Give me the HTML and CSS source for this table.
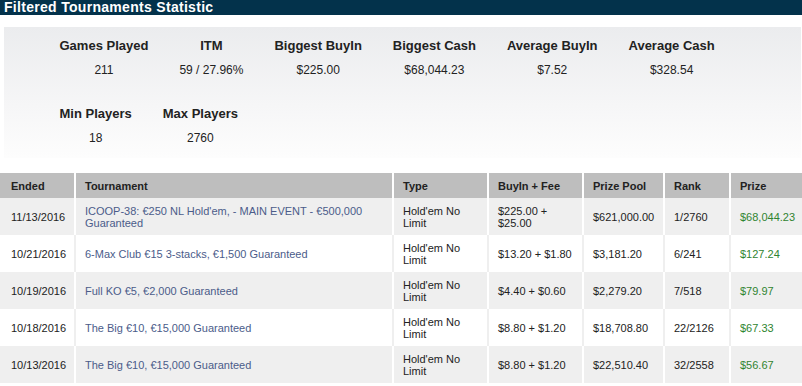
FILE: index.html
```html
<!DOCTYPE html>
<html>
<head>
<meta charset="utf-8">
<link rel="stylesheet" href="styles.css">
</head>
<body>
<div class="titlebar">Filtered Tournaments Statistic</div>
<div class="stats">
  <div class="stats-row">
    <div class="stat"><div class="label">Games Played</div><div class="value">211</div></div>
    <div class="stat"><div class="label">ITM</div><div class="value">59 / 27.96%</div></div>
    <div class="stat"><div class="label">Biggest BuyIn</div><div class="value">$225.00</div></div>
    <div class="stat"><div class="label">Biggest Cash</div><div class="value">$68,044.23</div></div>
    <div class="stat"><div class="label">Average BuyIn</div><div class="value">$7.52</div></div>
    <div class="stat"><div class="label">Average Cash</div><div class="value">$328.54</div></div>
  </div>
  <div class="stats-row second">
    <div class="stat"><div class="label">Min Players</div><div class="value">18</div></div>
    <div class="stat"><div class="label">Max Players</div><div class="value">2760</div></div>
  </div>
</div>
<table class="results">
  <colgroup>
    <col class="c-ended"><col class="c-tour"><col class="c-type"><col class="c-buyin"><col class="c-pool"><col class="c-rank"><col class="c-prize">
  </colgroup>
  <thead>
    <tr><th>Ended</th><th>Tournament</th><th>Type</th><th>BuyIn + Fee</th><th>Prize Pool</th><th>Rank</th><th>Prize</th></tr>
  </thead>
  <tbody>
    <tr><td>11/13/2016</td><td><a class="tour">ICOOP-38: €250 NL Hold'em, - MAIN EVENT - €500,000 Guaranteed</a></td><td>Hold'em No Limit</td><td>$225.00 + $25.00</td><td>$621,000.00</td><td>1/2760</td><td class="prize">$68,044.23</td></tr>
    <tr><td>10/21/2016</td><td><a class="tour">6-Max Club €15 3-stacks, €1,500 Guaranteed</a></td><td>Hold'em No Limit</td><td>$13.20 + $1.80</td><td>$3,181.20</td><td>6/241</td><td class="prize">$127.24</td></tr>
    <tr><td>10/19/2016</td><td><a class="tour">Full KO €5, €2,000 Guaranteed</a></td><td>Hold'em No Limit</td><td>$4.40 + $0.60</td><td>$2,279.20</td><td>7/518</td><td class="prize">$79.97</td></tr>
    <tr><td>10/18/2016</td><td><a class="tour">The Big €10, €15,000 Guaranteed</a></td><td>Hold'em No Limit</td><td>$8.80 + $1.20</td><td>$18,708.80</td><td>22/2126</td><td class="prize">$67.33</td></tr>
    <tr><td>10/13/2016</td><td><a class="tour">The Big €10, €15,000 Guaranteed</a></td><td>Hold'em No Limit</td><td>$8.80 + $1.20</td><td>$22,510.40</td><td>32/2558</td><td class="prize">$56.67</td></tr>
  </tbody>
</table>
</body>
</html>
```
FILE: styles.css
```css
html, body {
  margin: 0;
  padding: 0;
  background: #fff;
  font-family: "Liberation Sans", Arial, sans-serif;
  color: #222;
}

.titlebar {
  height: 15px;
  line-height: 15px;
  background: #03324b;
  color: #fff;
  font-weight: bold;
  font-size: 14px;
  letter-spacing: 0.3px;
  padding-left: 4px;
  white-space: nowrap;
  overflow: hidden;
}

.stats {
  margin: 12px 1px 0 4px;
  padding: 11px 0 12px 40px;
  background: linear-gradient(to bottom, #ebecee 0%, #f6f6f7 60%, #fdfdfd 100%);
}

.stats-row {
  display: flex;
}

.stats-row.second {
  margin-top: 28px;
}

.stat {
  padding: 0 15.5px;
  text-align: center;
  min-width: 63px;
}

.label {
  font-size: 13px;
  font-weight: bold;
  line-height: 16px;
  color: #222;
  white-space: nowrap;
}

.value {
  font-size: 12px;
  line-height: 16px;
  margin-top: 8px;
  color: #222;
  white-space: nowrap;
}

.results {
  margin-top: 15px;
  width: 802px;
  table-layout: fixed;
  border-collapse: separate;
  border-spacing: 0;
  font-size: 11px;
}

.c-ended { width: 74px; }
.c-tour { width: 318px; }
.c-type { width: 95px; }
.c-buyin { width: 95px; }
.c-pool { width: 81px; }
.c-rank { width: 66px; }
.c-prize { width: 73px; }

.results th {
  height: 25px;
  padding: 0 0 0 9px;
  background: #bebebe;
  text-align: left;
  font-weight: bold;
  color: #222;
  border-left: 2px solid #fff;
  box-sizing: border-box;
}

.results td {
  height: 37px;
  padding: 0 6px 0 9px;
  line-height: 12px;
  vertical-align: middle;
  border-left: 2px solid #fff;
  color: #222;
}

.results th:first-child,
.results td:first-child {
  border-left: none;
  padding-left: 11px;
}

.results tbody tr:nth-child(odd) td {
  background: #efefef;
}

.results tbody tr:nth-child(even) td {
  background: #fff;
  border-left-color: #efefef;
}

.results tbody tr:nth-child(even) td:first-child {
  border-left: none;
}

.tour {
  color: #4b5c8a;
  text-decoration: none;
}

.results td.prize {
  color: #2f8431;
}
```
